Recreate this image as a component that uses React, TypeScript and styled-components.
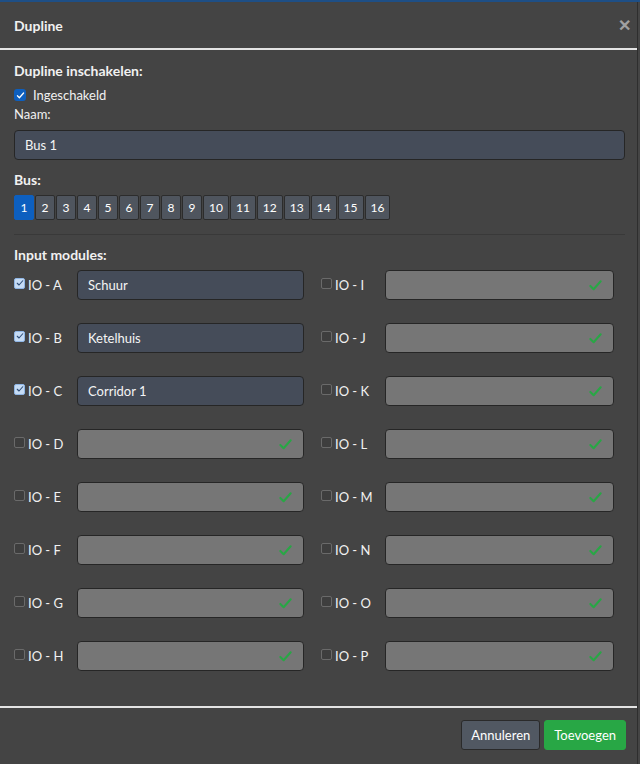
import React from 'react';
import styled, { createGlobalStyle } from 'styled-components';

const GlobalStyle = createGlobalStyle`
    html, body {
        margin: 0;
        padding: 0;
        background: #3c3c3c;
    }
    body {
        font-family: Lato, "Open Sans", sans-serif;
        color: #f1f1f1;
    }
`;

const Page = styled.div`
    width: 640px;
    height: 764px;
    overflow: hidden;
    background: #454545;
    border-top: 2px solid #1e4f86;
    box-sizing: border-box;
`;

const Modal = styled.div`
    width: 638px;
    height: 762px;
    background: #444444;
    border-right: 1px solid #2e2e2e;
    box-sizing: border-box;
    display: flex;
    flex-direction: column;
`;

const Header = styled.div`
    height: 46px;
    display: flex;
    align-items: center;
    justify-content: space-between;
    padding: 0 14px;
    border-bottom: 2px solid #e4e4e4;
`;

const Title = styled.div`
    font-size: 14px;
    font-weight: 700;
`;

const Close = styled.div`
    font-size: 16px;
    font-weight: 700;
    color: #a0a0a0;
    margin-right: -8px;
`;

const Body = styled.div`
    flex: 1;
    padding: 12px 12px 0 14px;
`;

const SectionTitle = styled.div<{ $top?: number }>`
    font-size: 14px;
    font-weight: 700;
    margin: ${(p) => p.$top || 0}px 0 7px;
`;

const CheckRow = styled.label`
    display: flex;
    align-items: center;
    gap: 7px;
    font-size: 13px;
    height: 18px;
`;

const BlueBox = styled.span`
    width: 12px;
    height: 12px;
    border-radius: 3px;
    background: #0d5fbf;
    display: inline-flex;
    align-items: center;
    justify-content: center;
`;

const FieldLabel = styled.div`
    font-size: 13px;
    margin: 2px 0 8px;
`;

const TextInput = styled.div`
    height: 30px;
    box-sizing: border-box;
    border: 1px solid #262626;
    border-radius: 4px;
    background: #454c59;
    font-size: 13px;
    display: flex;
    align-items: center;
    padding: 0 10px;
    color: #f4f4f4;
`;

const BusRow = styled.div`
    display: flex;
    gap: 1px;
`;

const BusButton = styled.div<{ $active?: boolean }>`
    height: 25px;
    min-width: 20px;
    padding: 0 5px;
    box-sizing: border-box;
    display: flex;
    align-items: center;
    justify-content: center;
    font-size: 12px;
    border: 1px solid ${(p) => (p.$active ? '#0d5fbf' : '#2c2c2c')};
    border-radius: 2px;
    background: ${(p) => (p.$active ? '#0d5fbf' : '#4f555e')};
    color: #fff;
`;

const Divider = styled.div`
    height: 1px;
    background: #393939;
    margin: 14px 0 11px;
`;

const IoGrid = styled.div`
    display: grid;
    grid-template-columns: 290px 293px;
    column-gap: 17px;
    row-gap: 23px;
    margin-top: 6px;
`;

const IoItem = styled.div`
    display: flex;
    align-items: center;
`;

const IoLabel = styled.div<{ $wide?: boolean }>`
    width: ${(p) => (p.$wide ? 64 : 63)}px;
    flex: none;
    display: flex;
    align-items: center;
    gap: 3px;
    font-size: 13px;
`;

const SmallBox = styled.span<{ $checked?: boolean }>`
    width: 9px;
    height: 9px;
    margin-top: -4px;
    border: 1px solid ${(p) => (p.$checked ? '#8fb6e6' : '#6a6a6a')};
    border-radius: 2px;
    background: ${(p) => (p.$checked ? '#c6dcf5' : '#3e3e3e')};
    display: inline-flex;
    align-items: center;
    justify-content: center;
`;

const IoInput = styled(TextInput)<{ $disabled?: boolean }>`
    flex: 1;
    background: ${(p) => (p.$disabled ? '#767676' : '#454c59')};
    justify-content: space-between;
`;

const Footer = styled.div`
    border-top: 2px solid #e4e4e4;
    height: 58px;
    box-sizing: border-box;
    display: flex;
    align-items: center;
    justify-content: flex-end;
    gap: 4px;
    padding: 0 11px 3px 0;
`;

const Button = styled.div<{ $primary?: boolean }>`
    height: 30px;
    box-sizing: border-box;
    padding: 0 9px;
    display: flex;
    align-items: center;
    font-size: 13px;
    border-radius: 3px;
    border: 1px solid ${(p) => (p.$primary ? '#28a745' : '#2a2a2a')};
    background: ${(p) => (p.$primary ? '#28a745' : '#515862')};
    color: #fff;
`;

const Tick = ({ color, size }: { color: string; size: number }) => (
    <svg width={size} height={size} viewBox="0 0 16 16">
        <path d="M2.5 8.5 L6 12 L13.5 3.5" fill="none" stroke={color} strokeWidth="2.2" strokeLinecap="round" strokeLinejoin="round" />
    </svg>
);

const left = ['A', 'B', 'C', 'D', 'E', 'F', 'G', 'H'];
const right = ['I', 'J', 'K', 'L', 'M', 'N', 'O', 'P'];
const names: Record<string, string> = { A: 'Schuur', B: 'Ketelhuis', C: 'Corridor 1' };

const IoField: React.FC<{ letter: string; wide?: boolean }> = ({ letter, wide }) => {
    const name = names[letter];
    return (
        <IoItem>
            <IoLabel $wide={wide}>
                <SmallBox $checked={!!name}>{name && <Tick color="#2f4f7a" size={8} />}</SmallBox>
                IO - {letter}
            </IoLabel>
            <IoInput $disabled={!name}>
                {name || <span />}
                {!name && <Tick color="#28a745" size={15} />}
            </IoInput>
        </IoItem>
    );
};

const App: React.FC = () => {
    return (
        <Page>
            <GlobalStyle />
            <Modal>
                <Header>
                    <Title>Dupline</Title>
                    <Close>✕</Close>
                </Header>
                <Body>
                    <SectionTitle>Dupline inschakelen:</SectionTitle>
                    <CheckRow>
                        <BlueBox><Tick color="#fff" size={9} /></BlueBox>
                        Ingeschakeld
                    </CheckRow>
                    <FieldLabel>Naam:</FieldLabel>
                    <TextInput>Bus 1</TextInput>
                    <SectionTitle $top={11}>Bus:</SectionTitle>
                    <BusRow>
                        {Array.from({ length: 16 }, (_, i) => (
                            <BusButton key={i} $active={i === 0}>{i + 1}</BusButton>
                        ))}
                    </BusRow>
                    <Divider />
                    <SectionTitle>Input modules:</SectionTitle>
                    <IoGrid>
                        {left.map((l, i) => (
                            <React.Fragment key={l}>
                                <IoField letter={l} />
                                <IoField letter={right[i]} wide />
                            </React.Fragment>
                        ))}
                    </IoGrid>
                </Body>
                <Footer>
                    <Button>Annuleren</Button>
                    <Button $primary>Toevoegen</Button>
                </Footer>
            </Modal>
        </Page>
    );
};

export default App;
